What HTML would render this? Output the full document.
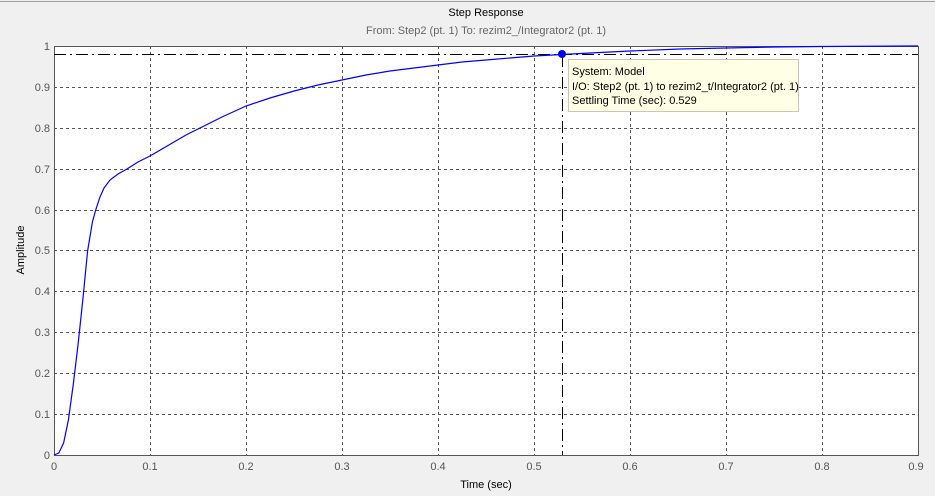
<!DOCTYPE html>
<html><head><meta charset="utf-8"><style>
html,body{margin:0;padding:0;background:#f0f0f0;}
body{width:935px;height:496px;overflow:hidden;position:relative;font-family:"Liberation Sans",sans-serif;}
</style></head><body>
<svg width="935" height="496" xmlns="http://www.w3.org/2000/svg" style="position:absolute;left:0;top:0">
<rect x="0" y="0" width="935" height="496" fill="#f0f0f0"/>
<line x1="0" y1="1.5" x2="935" y2="1.5" stroke="#a0a0a0" stroke-width="1"/>
<rect x="54.5" y="46.5" width="864" height="409" fill="#fff" stroke="#555" stroke-width="1"/>
<g stroke="#555" stroke-dasharray="3,3" stroke-width="1">
<line x1="150.5" y1="46" x2="150.5" y2="455"/><line x1="246.5" y1="46" x2="246.5" y2="455"/>
<line x1="342.5" y1="46" x2="342.5" y2="455"/><line x1="438.5" y1="46" x2="438.5" y2="455"/>
<line x1="534.5" y1="46" x2="534.5" y2="455"/><line x1="630.5" y1="46" x2="630.5" y2="455"/>
<line x1="726.5" y1="46" x2="726.5" y2="455"/><line x1="822.5" y1="46" x2="822.5" y2="455"/>
<line x1="54" y1="87.5" x2="918" y2="87.5"/><line x1="54" y1="128.5" x2="918" y2="128.5"/>
<line x1="54" y1="169.5" x2="918" y2="169.5"/><line x1="54" y1="210.5" x2="918" y2="210.5"/>
<line x1="54" y1="250.5" x2="918" y2="250.5"/><line x1="54" y1="291.5" x2="918" y2="291.5"/>
<line x1="54" y1="332.5" x2="918" y2="332.5"/><line x1="54" y1="373.5" x2="918" y2="373.5"/>
<line x1="54" y1="414.5" x2="918" y2="414.5"/>
<line x1="54" y1="46.5" x2="918" y2="46.5"/>
</g>
<g stroke="#000" stroke-width="1" stroke-dasharray="12,4,2,4">
<line x1="54" y1="54.5" x2="918" y2="54.5"/>
<line x1="562.5" y1="55" x2="562.5" y2="455"/>
</g>
<polyline fill="none" stroke="#0000ff" stroke-width="1.2" points="54,455 58.8,453 63.6,443 68.4,420 73.2,385 78,345 82.8,300 87.6,251 92.4,222 96,209 100,197 104,188 110,180 118,174 127,169 138,162 150,156 162,149 174,142 186,135 200,128 222,117 246,106 270,98 294,91 318,85 342,80 366,75 390,71 414,68 438,65 462,62 486,60 510,58 534,56 562,54.5 600,52.5 630,51 680,49 726,48 775,47 822,46.5 918,46"/>
<circle cx="562" cy="54" r="4" fill="#0000ff"/>
<rect x="568.5" y="59.5" width="230" height="52" fill="#ffffe6" stroke="#c8c8b4"/>
<g font-size="11" fill="#000">
<text x="572" y="75">System: Model</text>
<text x="572" y="90">I/O: Step2 (pt. 1) to rezim2_t/Integrator2 (pt. 1)</text>
<text x="572" y="104">Settling Time (sec): 0.529</text>
</g>
<text x="486" y="16" font-size="11" text-anchor="middle" fill="#000">Step Response</text>
<text x="486" y="34" font-size="11" text-anchor="middle" fill="#666">From: Step2 (pt. 1)  To: rezim2_/Integrator2 (pt. 1)</text>
<g font-size="11" fill="#555" text-anchor="end">
<text x="50" y="50">1</text><text x="50" y="91">0.9</text><text x="50" y="132">0.8</text>
<text x="50" y="173">0.7</text><text x="50" y="214">0.6</text><text x="50" y="254">0.5</text>
<text x="50" y="295">0.4</text><text x="50" y="336">0.3</text><text x="50" y="377">0.2</text>
<text x="50" y="418">0.1</text><text x="50" y="459">0</text>
</g>
<g font-size="11" fill="#555" text-anchor="middle">
<text x="54" y="470">0</text><text x="150" y="470">0.1</text><text x="246" y="470">0.2</text>
<text x="342" y="470">0.3</text><text x="438" y="470">0.4</text><text x="534" y="470">0.5</text>
<text x="630" y="470">0.6</text><text x="726" y="470">0.7</text><text x="822" y="470">0.8</text>
<text x="916" y="470">0.9</text>
</g>
<text x="486" y="488" font-size="11" text-anchor="middle" fill="#000">Time (sec)</text>
<text transform="translate(24,250) rotate(-90)" font-size="11" text-anchor="middle" fill="#000">Amplitude</text>
</svg>
</body></html>
